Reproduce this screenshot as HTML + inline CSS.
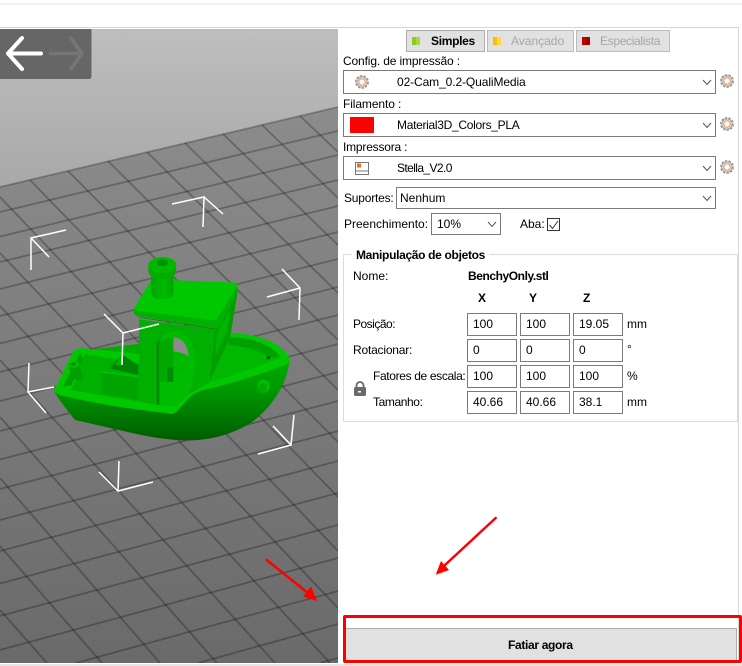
<!DOCTYPE html>
<html lang="pt"><head><meta charset="utf-8"><title>Fatiar agora</title>
<style>
html,body{margin:0;padding:0;background:#fff;width:742px;height:666px;overflow:hidden}
body{position:relative;font:12px/16px "Liberation Sans",sans-serif;color:#000}
.a{position:absolute;white-space:nowrap}
.t{position:absolute;white-space:nowrap;transform:translateY(-50%)}
.b{font-weight:bold}
.box{position:absolute;box-sizing:border-box;border:1px solid #7a7a7a;background:#fff}
.inp{position:absolute;box-sizing:border-box;width:50px;height:23px;border:1px solid #7a7a7a;padding-left:5px;line-height:21px;background:#fff}
.tab{position:absolute;box-sizing:border-box;top:30px;height:22px;background:#e1e1e1;border:1px solid #bcbcbc}
svg{position:absolute;left:0;top:0;overflow:hidden}
</style></head><body>
<div class="a" style="left:0;top:3px;width:742px;height:2px;background:#f0f0f0"></div>
<div class="a" style="left:0;top:27px;width:739px;height:1px;background:#d6d6d6"></div>
<div class="a" style="left:738px;top:27px;width:1px;height:636px;background:#d6d6d6"></div>
<div class="a" style="left:0;top:664px;width:742px;height:2px;background:#e6e6e6"></div>

<svg width="742" height="666" viewBox="0 0 742 666">
<defs>
<linearGradient id="sky" x1="0" y1="29" x2="0" y2="190" gradientUnits="userSpaceOnUse"><stop offset="0" stop-color="#bebebe"/><stop offset="1" stop-color="#a8a8a8"/></linearGradient>
<linearGradient id="fl" x1="0" y1="107" x2="0" y2="663" gradientUnits="userSpaceOnUse"><stop offset="0" stop-color="#8c8c8c"/><stop offset="1" stop-color="#6a6a6a"/></linearGradient>
<linearGradient id="hull" x1="0" y1="330" x2="0" y2="570" gradientUnits="userSpaceOnUse"><stop offset="0" stop-color="#00ac00"/><stop offset=".45" stop-color="#009200"/><stop offset="1" stop-color="#005c00"/></linearGradient>
<linearGradient id="neck" x1="333" y1="0" x2="400" y2="0" gradientUnits="userSpaceOnUse"><stop offset="0" stop-color="#00a400"/><stop offset=".6" stop-color="#00bc00"/><stop offset="1" stop-color="#00a000"/></linearGradient>
<filter id="soft" x="-5%" y="-5%" width="110%" height="110%"><feGaussianBlur stdDeviation=".35"/></filter>
<clipPath id="sc"><rect x="0" y="29" width="338" height="634"/></clipPath>
<g id="gear"><circle r="6" fill="none" stroke="#969696" stroke-width="1.800" stroke-dasharray="2.400 1.300"/><circle r="5" fill="none" stroke="#a6a6a6" stroke-width="1"/><circle r="3.300" fill="#fff" stroke="#ea9a66" stroke-width="1.200"/></g>
</defs>
<g clip-path="url(#sc)">
<rect x="0" y="29" width="338" height="634" fill="url(#sky)"/>
<polygon points="0,187 338,107 338,663 0,663" fill="url(#fl)"/>
<g stroke="#000" stroke-opacity=".26" stroke-width="1.800" fill="none" filter="url(#soft)">
<path d="M0 187L338 107M0 212L338 131M0 236.500L338 155M0 262L338 180M0 289L338 206M0 316L338 232M0 343.500L338 259M0 372L338 287M0 401L338 315M0 431L338 344M0 459.500L338 372M0 489L338 401M0 520L338 431M0 551L338 461M0 583.500L338 493M0 616L338 525M0 650L338 558M76 663L338 591M198 663L338 624M320 663L338 658"/>
<path d="M300 116L338 152M262 125L338 198M223 134L338 245M185 143L338 293M147 152L338 340M108 161L338 390M68 171L338 442M30 180L338 497M0 197L338 551M0 253L338 608M0 306L330 663M0 360L275 663M0 417L217 663M0 478L160 663M0 546L102 663M0 610L47 663"/>
</g>

<g fill="none" stroke="#fff" stroke-width="1.500">
<path d="M66 230L31 238L31 270M31 238L49 257"/>
<path d="M172 204L204 197L203 227M204 197L223 214"/>
<path d="M282 269L300 288L299 320M300 288L267 297"/>
<path d="M29 363L28 392L54 387M28 392L46 413"/>
<path d="M294 415L291 445L258 454M291 445L273 426"/>
<path d="M119 461L118 491L153 482M118 491L99 472"/>
</g>

<g transform="translate(40 250) scale(.33333)">
<path d="M45 428C60 455 85 485 105 510L250 543C320 560 390 572 450 571C520 570 580 550 630 520C690 480 745 400 748 330L560 250L100 305Z" fill="url(#hull)"/>
<path d="M42 420L100 305Q110 292 130 295L400 322L560 248C640 250 715 270 748 322Q750 338 735 345Q600 395 490 420Q460 428 445 445L410 485Q400 495 385 490Q200 470 60 435Q45 430 42 420Z" fill="#00c800"/>
<path d="M68 410L120 310L130 325L95 405Z" fill="#00a000"/>
<path d="M135 312L300 340L300 455L90 420L100 405Z" fill="#00b000"/>
<path d="M570 262C640 262 695 285 722 322Q620 365 505 398L530 290Z" fill="#00b800"/>
<path d="M570 262C640 262 695 285 722 322L690 322Q640 290 565 285Z" fill="#00a000"/>
<ellipse cx="685" cy="323" rx="6" ry="5" fill="#005c00"/>
<path d="M355 395L505 398L455 420L410 470L355 465Z" fill="#00c400"/>
<path d="M85 345L98 385Q115 395 130 385L115 340Z" fill="#009e00"/>
<ellipse cx="100" cy="343" rx="17" ry="10" fill="#00c000"/>
<ellipse cx="100" cy="342" rx="8" ry="5" fill="#008800"/>
<path d="M210 355L245 313L295 345L295 375Z" fill="#008400"/>
<path d="M245 313L245 345L225 345Z" fill="#00b400"/>
<path d="M183 365L295 380L295 450L188 430Z" fill="#00a400"/>
<path d="M183 365L295 380" stroke="#00c400" stroke-width="5" fill="none"/>
<path d="M525 238L593 125L570 265L505 400Z" fill="#00a000"/>
<path d="M530 250L572 175L560 245L525 320Z" fill="#00b400"/>
<path d="M297 208L525 238L503 400L448 432L358 465L297 455Z" fill="#00b000"/>
<path d="M358 465L358 290Q365 245 405 245Q462 250 465 335Q465 390 445 430L410 470Z" fill="#00bc00"/>
<path d="M350 278L358 270L358 466L350 464Z" fill="#008800"/>
<path d="M360 278Q375 262 400 260L400 396L360 396Z" fill="#00a800"/>
<path d="M400 262Q442 265 446 320Q425 305 400 305Z" fill="#8b8b8b"/>
<path d="M400 305Q425 305 446 320L440 372Q420 370 400 352Z" fill="#00b800"/>
<path d="M382 352L400 352L400 396L382 396Z" fill="#008c00"/>
<path d="M282 175L282 190Q285 198 300 200L525 236Q535 236 540 226L593 125L590 100L525 210Z" fill="#00b000"/>
<path d="M297 202L525 237" stroke="#007a00" stroke-width="2" fill="none"/>
<path d="M335 88L582 98Q592 100 590 108L532 205Q525 212 515 210L290 182Q280 178 285 170Z" fill="#00c800"/>
<path d="M333 75L333 130Q340 148 367 148Q395 148 400 130L400 75Z" fill="url(#neck)"/>
<path d="M325 45L325 64Q330 88 367 88Q403 88 408 64L408 45Z" fill="#00ac00"/>
<ellipse cx="367" cy="45" rx="42" ry="24" fill="#00b800"/>
<ellipse cx="367" cy="38" rx="17" ry="10" fill="#009000"/>
<ellipse cx="668" cy="410" rx="23" ry="23" fill="#00a000"/>
<ellipse cx="671" cy="408" rx="18" ry="18" fill="#00c000"/>
<ellipse cx="668" cy="412" rx="13" ry="14" fill="#00a800"/>
</g>

<path d="M104 314L123 333L159 324M123 333L122 365" fill="none" stroke="#fff" stroke-width="1.500"/>
<path d="M0 29H91.500V76Q91.500 79 88.500 79H0Z" fill="#666"/>
<path d="M41 53.500H9M22 38L8 53.500L22 69" fill="none" stroke="#fff" stroke-width="4" stroke-linecap="round" stroke-linejoin="round"/>
<path d="M50.500 53.500H81M71 38L82 53.500L71 69" fill="none" stroke="#767676" stroke-width="3.500" stroke-linecap="round" stroke-linejoin="round"/>
</g>
<path d="M266.700 560L308 593" stroke="#f00" stroke-width="2.500" fill="none" stroke-linecap="round"/>
<path d="M317 601L303 596.500L311 586.500Z" fill="#f00"/>
<path d="M495.700 518L445 565" stroke="#f00" stroke-width="2.500" fill="none" stroke-linecap="round"/>
<path d="M435.700 574.700L441 561L449 570Z" fill="#f00"/>
</svg>

<div class="tab" style="left:406px;width:79px;border-color:#adadad"></div>
<div class="a" style="left:412px;top:37px;width:8px;height:8px;background:linear-gradient(90deg,#8cc820 50%,#a4d83c 50%)"></div>
<div class="t b" style="left:431px;top:41px;letter-spacing:-.3px">Simples</div>
<div class="tab" style="left:487px;width:87px"></div>
<div class="a" style="left:493px;top:37px;width:8px;height:8px;background:linear-gradient(90deg,#f8c000 50%,#fcd848 50%)"></div>
<div class="t" style="left:511px;top:41px;color:#a6a6a6">Avançado</div>
<div class="tab" style="left:576px;width:94px"></div>
<div class="a" style="left:582px;top:37px;width:8px;height:8px;background:linear-gradient(90deg,#c00000 50%,#a80000 50%)"></div>
<div class="t" style="left:600px;top:41px;color:#a6a6a6;letter-spacing:-.33px">Especialista</div>

<div class="t" style="left:343px;top:61px;letter-spacing:-.14px">Config. de impressão :</div>
<div class="box" style="left:343px;top:70px;width:373px;height:24px"></div>
<div class="t" style="left:397px;top:82px;letter-spacing:-.1px">02-Cam_0.2-QualiMedia</div>
<div class="t" style="left:343px;top:104px;letter-spacing:-.1px">Filamento :</div>
<div class="box" style="left:343px;top:113px;width:373px;height:24px"></div>
<div class="a" style="left:350px;top:117px;width:24px;height:16px;background:#f00"></div>
<div class="t" style="left:397px;top:125px;letter-spacing:-.3px">Material3D_Colors_PLA</div>
<div class="t" style="left:343px;top:147px;letter-spacing:-.2px">Impressora :</div>
<div class="box" style="left:343px;top:156px;width:373px;height:24px"></div>
<div class="t" style="left:397px;top:168px;letter-spacing:-.6px">Stella_V2.0</div>
<div class="t" style="left:344px;top:198px;letter-spacing:-.2px">Suportes:</div>
<div class="box" style="left:396px;top:187px;width:320px;height:22px"></div>
<div class="t" style="left:400px;top:198px">Nenhum</div>
<div class="t" style="left:344px;top:224px">Preenchimento:</div>
<div class="box" style="left:431px;top:213px;width:70px;height:22px"></div>
<div class="t" style="left:437px;top:224px">10%</div>
<div class="t" style="left:520px;top:224px">Aba:</div>
<div class="box" style="left:547px;top:218px;width:13px;height:13px;border-color:#333"></div>

<div class="a" style="box-sizing:border-box;left:343px;top:254px;width:395px;height:168px;border:1px solid #dcdcdc"></div>
<div class="t b" style="left:352px;top:255px;background:#fff;padding:0 4px;letter-spacing:-.32px">Manipulação de objetos</div>
<div class="t" style="left:353px;top:276px">Nome:</div>
<div class="t b" style="left:468px;top:276px;letter-spacing:-.43px">BenchyOnly.stl</div>
<div class="t b" style="left:478px;top:298px">X</div>
<div class="t b" style="left:529px;top:298px">Y</div>
<div class="t b" style="left:583px;top:298px">Z</div>
<div class="t" style="left:353px;top:324px;letter-spacing:-.5px">Posição:</div>
<div class="t" style="left:353px;top:350px;letter-spacing:-.2px">Rotacionar:</div>
<div class="t" style="left:373px;top:376px;letter-spacing:-.35px">Fatores de escala:</div>
<div class="t" style="left:373px;top:402px;letter-spacing:-.4px">Tamanho:</div>
<div class="inp" style="left:467px;top:313px">100</div><div class="inp" style="left:520px;top:313px">100</div><div class="inp" style="left:573px;top:313px">19.05</div>
<div class="inp" style="left:467px;top:339px">0</div><div class="inp" style="left:520px;top:339px">0</div><div class="inp" style="left:573px;top:339px">0</div>
<div class="inp" style="left:467px;top:365px">100</div><div class="inp" style="left:520px;top:365px">100</div><div class="inp" style="left:573px;top:365px">100</div>
<div class="inp" style="left:467px;top:391px">40.66</div><div class="inp" style="left:520px;top:391px">40.66</div><div class="inp" style="left:573px;top:391px">38.1</div>
<div class="t" style="left:627px;top:324px">mm</div>
<div class="t" style="left:627px;top:349px">°</div>
<div class="t" style="left:627px;top:376px">%</div>
<div class="t" style="left:627px;top:402px">mm</div>

<div class="a" style="box-sizing:border-box;left:344px;top:628px;width:393px;height:33px;background:#e1e1e1;border:1px solid #adadad"></div>
<div class="t b" style="left:508px;top:645px;letter-spacing:-.33px">Fatiar agora</div>
<div class="a" style="box-sizing:border-box;left:343px;top:615px;width:399px;height:48px;border:3px solid #f00;border-radius:2px"></div>

<svg width="742" height="666" viewBox="0 0 742 666" style="pointer-events:none">
<use href="#gear" x="362" y="82"/>
<use href="#gear" x="727" y="81"/>
<use href="#gear" x="727" y="124"/>
<use href="#gear" x="727" y="167"/>
<g fill="none" stroke="#555" stroke-width="1">
<path d="M703 80L707 84.500L711 80M703 123L707 127.500L711 123M703 166L707 170.500L711 166M703 196L707 200.500L711 196M488 222L492 226.500L496 222"/>
</g>
<path d="M549.500 225L552.500 228.500L558 221" fill="none" stroke="#333" stroke-width="1"/>
<rect x="355.500" y="162.500" width="13" height="12" fill="#fff" stroke="#777"/>
<path d="M355.500 171H368.500" stroke="#777" stroke-width="1"/>
<rect x="357" y="163.500" width="4" height="4" fill="#ef6c1a"/>
<path d="M356.500 387V385.500A3.500 3.500 0 0 1 363.500 385.500V387" fill="none" stroke="#6a6a6a" stroke-width="1.800"/>
<rect x="354" y="387" width="12" height="9" rx="1.500" fill="#6a6a6a"/>
<rect x="358" y="391" width="3" height="1.500" fill="#fff"/>
</svg>
</body></html>
